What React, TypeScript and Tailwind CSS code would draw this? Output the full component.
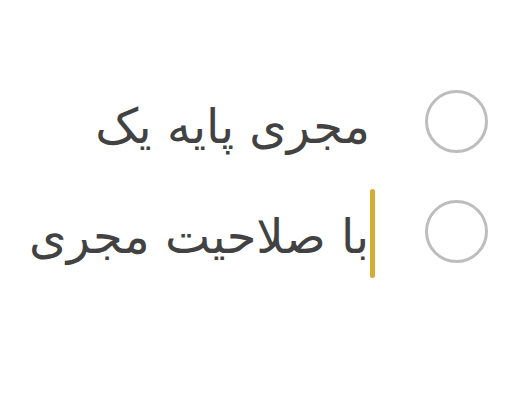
export default function App() {
  return (
    <div className="w-[505px] h-[409px] bg-white relative overflow-hidden" style={{ fontFamily: '"DejaVu Sans", "Noto Sans", sans-serif' }}>
      <div className="flex flex-col items-end pr-[17px] pt-[90px] gap-[47px]">
        <div className="flex items-center h-[63px]">
          <span dir="rtl" className="text-[48px] leading-none text-[#424242] relative top-[4px]">مجری پایه یک</span>
          <div className="w-[55px]" />
          <div className="w-[63px] h-[63px] rounded-full border-[3px] border-[#bdbdbd]" />
        </div>
        <div className="flex items-center h-[63px]">
          <span dir="rtl" className="text-[48px] leading-none text-[#424242] relative top-[4px]">با صلاحیت مجری</span>
          <div className="w-[5px] h-[89px] rounded-full bg-[#d6ac35] mx-[1px] relative top-[2px]" />
          <div className="w-[49px]" />
          <div className="w-[63px] h-[63px] rounded-full border-[3px] border-[#bdbdbd]" />
        </div>
      </div>
    </div>
  );
}
